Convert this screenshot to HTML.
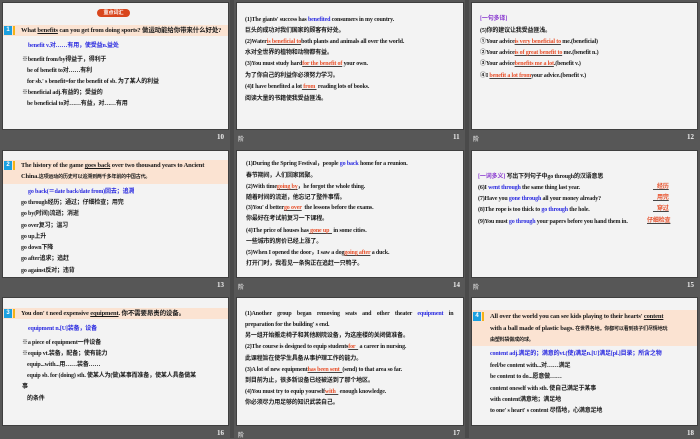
<!DOCTYPE html>
<html><head><meta charset="utf-8"><style>
*{margin:0;padding:0;box-sizing:border-box}
body{width:700px;height:438px;background:#575757;position:relative;overflow:hidden;font-family:"Liberation Serif","Noto Sans CJK SC",serif;font-weight:bold;color:#1a1a1a}
.s{position:absolute;background:#f3f3f3;border:1px solid #3f3f3f}
.l{position:absolute;font-size:6px;line-height:7px;white-space:nowrap;letter-spacing:-0.15px}
.b{color:#2a2ae0}
.r{color:#e8502a;text-decoration:underline;text-decoration-color:#444}
.band{position:absolute;left:0;right:0;background:#fbe3d2}
.num{position:absolute;width:8px;height:9px;background:#1aa0e0;color:#fff;font:bold 6px "Liberation Sans",sans-serif;text-align:center;line-height:9px}
.bar{position:absolute;width:2px;height:9px;background:#f5b316}
.pn{position:absolute;font-size:7px;color:#eee;font-family:"Liberation Serif",serif}
.jie{position:absolute;font-size:6px;color:#ccc;font-family:"Noto Sans CJK SC",sans-serif}
.sep{position:absolute;top:0;width:4px;height:438px;background:#4a4a4a}
.cn{font-family:"Noto Sans CJK SC",sans-serif}
</style></head><body>
<div class="sep" style="left:230px"></div><div class="sep" style="left:465px"></div>

<!-- slide 10 -->
<div class="s" style="left:2px;top:2px;width:227px;height:128px">
 <div style="position:absolute;left:94px;top:6px;width:33px;height:8px;border-radius:4px;background:#d9461d;color:#fff;font-size:5px;line-height:8px;text-align:center" class="cn">重点词汇</div>
 <div class="band" style="top:22px;height:11px"></div>
 <div class="num" style="left:1px;top:23px">1</div><div class="bar" style="left:10px;top:23px"></div>
 <div class="l" style="left:18px;top:24px;font-size:6.5px">What <u>benefits</u> can you get from doing sports? 做运动能给你带来什么好处?</div>
 <div class="l b" style="left:25px;top:40px">benefit v.对……有用，使受益n.益处</div>
 <div class="l" style="left:19px;top:54px">※benefit from/by得益于，得利于</div>
 <div class="l" style="left:24px;top:65px">be of benefit to对……有利</div>
 <div class="l" style="left:24px;top:76px">for sb.' s benefit=for the benefit of sb. 为了某人的利益</div>
 <div class="l" style="left:19px;top:87px">※beneficial adj.有益的；受益的</div>
 <div class="l" style="left:24px;top:98px">be beneficial to对……有益，对……有用</div>
</div>
<div class="pn" style="left:217px;top:133px">10</div>

<!-- slide 11 -->
<div class="s" style="left:236px;top:2px;width:228px;height:128px">
 <div class="l" style="left:8px;top:14px">(1)The giants' success has <span class="b">benefited</span> consumers in my country.</div>
 <div class="l" style="left:8px;top:25px">巨头的成功对我们国家的顾客有好处。</div>
 <div class="l" style="left:8px;top:36px">(2)Water<span class="r">is beneficial to</span>both plants and animals all over the world.</div>
 <div class="l" style="left:8px;top:47px">水对全世界的植物和动物都有益。</div>
 <div class="l" style="left:8px;top:58px">(3)You must study hard<span class="r">for the benefit of</span> your own.</div>
 <div class="l" style="left:8px;top:70px">为了你自己的利益你必须努力学习。</div>
 <div class="l" style="left:8px;top:81px">(4)I have benefited a lot<span class="r">&nbsp;from&nbsp;</span> reading lots of books.</div>
 <div class="l" style="left:8px;top:93px">阅读大量的书籍使我受益匪浅。</div>
</div>
<div class="jie" style="left:238px;top:134px">阶</div>
<div class="pn" style="left:453px;top:133px">11</div>

<!-- slide 12 -->
<div class="s" style="left:471px;top:2px;width:227px;height:128px">
 <div class="l" style="left:8px;top:13px;color:#8a3ad0">[一句多译]</div>
 <div class="l" style="left:8px;top:25px">(5)你的建议让我受益匪浅。</div>
 <div class="l" style="left:8px;top:36px">①Your advice<span class="r">is very beneficial to</span> me.(beneficial)</div>
 <div class="l" style="left:8px;top:47px">②Your advice<span class="r">is of great benefit to</span> me.(benefit n.)</div>
 <div class="l" style="left:8px;top:58px">③Your advice<span class="r">benefits me a lot</span>.(benefit v.)</div>
 <div class="l" style="left:8px;top:70px">④I <span class="r">benefit a lot from</span>your advice.(benefit v.)</div>
</div>
<div class="jie" style="left:473px;top:134px">阶</div>
<div class="pn" style="left:687px;top:133px">12</div>

<!-- slide 13 -->
<div class="s" style="left:2px;top:150px;width:227px;height:128px">
 <div class="band" style="top:9px;height:24px"></div>
 <div class="num" style="left:1px;top:10px">2</div><div class="bar" style="left:10px;top:10px"></div>
 <div class="l" style="left:18px;top:11px;font-size:6.5px">The history of the game <u>goes back</u> over two thousand years to Ancient</div>
 <div class="l" style="left:18px;top:22px;font-size:6.5px">China.<span style="font-size:5px">这项运动的历史可以追溯到两千多年前的中国古代。</span></div>
 <div class="l b" style="left:25px;top:38px">go back(＝date back/date from)回去；追溯</div>
 <div class="l" style="left:18px;top:49px">go through经历；通过；仔细检查；用完</div>
 <div class="l" style="left:18px;top:60px">go by(时间)流逝；消逝</div>
 <div class="l" style="left:18px;top:72px">go over复习；温习</div>
 <div class="l" style="left:18px;top:83px">go up上升</div>
 <div class="l" style="left:18px;top:94px">go down下降</div>
 <div class="l" style="left:18px;top:105px">go after追求；追赶</div>
 <div class="l" style="left:18px;top:117px">go against反对；违背</div>
</div>
<div class="pn" style="left:217px;top:281px">13</div>

<!-- slide 14 -->
<div class="s" style="left:236px;top:150px;width:228px;height:128px">
 <div class="l" style="left:9px;top:10px">(1)During the Spring Festival，people <span class="b">go back</span> home for a reunion.</div>
 <div class="l" style="left:9px;top:22px">春节期间，人们回家团聚。</div>
 <div class="l" style="left:9px;top:33px">(2)With time<span class="r">going by</span>，he forgot the whole thing.</div>
 <div class="l" style="left:9px;top:44px">随着时间的流逝，他忘记了整件事情。</div>
 <div class="l" style="left:9px;top:54px">(3)You' d better<span class="r">go over</span>&nbsp; the lessons before the exams.</div>
 <div class="l" style="left:9px;top:65px">你最好在考试前复习一下课程。</div>
 <div class="l" style="left:9px;top:77px">(4)The price of houses has<span class="r">&nbsp;gone up&nbsp;&nbsp;</span> in some cities.</div>
 <div class="l" style="left:9px;top:88px">一些城市的房价已经上涨了。</div>
 <div class="l" style="left:9px;top:99px">(5)When I opened the door，I saw a dog<span class="r">going after</span> a duck.</div>
 <div class="l" style="left:9px;top:110px">打开门时，我看见一条狗正在追赶一只鸭子。</div>
</div>
<div class="jie" style="left:238px;top:282px">阶</div>
<div class="pn" style="left:453px;top:281px">14</div>

<!-- slide 15 -->
<div class="s" style="left:471px;top:150px;width:227px;height:128px">
 <div class="l" style="left:6px;top:23px"><span style="color:#8a3ad0">[一词多义]</span> 写出下列句子中go through的汉语意思</div>
 <div class="l" style="left:6px;top:34px">(6)I <span class="b">went through</span> the same thing last year.</div>
 <div class="l" style="left:6px;top:45px">(7)Have you <span class="b">gone through</span> all your money already?</div>
 <div class="l" style="left:6px;top:56px">(8)The rope is too thick to <span class="b">go through</span> the hole.</div>
 <div class="l" style="left:6px;top:68px">(9)You must <span class="b">go through</span> your papers before you hand them in.</div>
 <div class="l r" style="left:181px;top:33px">&nbsp;&nbsp;&nbsp;经历</div>
 <div class="l r" style="left:181px;top:44px">&nbsp;&nbsp;&nbsp;用完</div>
 <div class="l r" style="left:181px;top:55px">&nbsp;&nbsp;&nbsp;穿过</div>
 <div class="l r" style="left:175px;top:67px">仔细检查</div>
</div>
<div class="jie" style="left:473px;top:282px">阶</div>
<div class="pn" style="left:687px;top:281px">15</div>

<!-- slide 16 -->
<div class="s" style="left:2px;top:297px;width:227px;height:129px">
 <div class="band" style="top:10px;height:11px"></div>
 <div class="num" style="left:1px;top:11px">3</div><div class="bar" style="left:10px;top:11px"></div>
 <div class="l" style="left:18px;top:12px;font-size:6.5px">You don' t need expensive <u>equipment</u>. 你不需要昂贵的设备。</div>
 <div class="l b" style="left:25px;top:28px">equipment n.[U]装备，设备</div>
 <div class="l" style="left:19px;top:42px">※a piece of equipment一件设备</div>
 <div class="l" style="left:19px;top:53px">※equip vt.装备，配备；使有能力</div>
 <div class="l" style="left:24px;top:64px">equip...with...用……装备……</div>
 <div class="l" style="left:24px;top:75px">equip sb. for (doing) sth. 使某人为(做)某事而准备，使某人具备做某</div>
 <div class="l" style="left:19px;top:86px">事</div>
 <div class="l" style="left:24px;top:98px">的条件</div>
</div>
<div class="pn" style="left:217px;top:429px">16</div>

<!-- slide 17 -->
<div class="s" style="left:236px;top:297px;width:228px;height:129px">
 <div class="l" style="left:8px;top:13px;word-spacing:4px">(1)Another group began removing seats and other theater <span class="b">equipment</span> in</div>
 <div class="l" style="left:8px;top:24px">preparation for the building' s end.</div>
 <div class="l" style="left:8px;top:35px">另一组开始搬走椅子和其他剧院设备，为这座楼的关闭做准备。</div>
 <div class="l" style="left:8px;top:46px">(2)The course is designed to equip students<span class="r">for&nbsp;&nbsp;</span> a career in nursing.</div>
 <div class="l" style="left:8px;top:58px">此课程旨在使学生具备从事护理工作的能力。</div>
 <div class="l" style="left:8px;top:69px">(3)A lot of new equipment<span class="r">has been sent&nbsp;&nbsp;</span>(send) to that area so far.</div>
 <div class="l" style="left:8px;top:80px">到目前为止，很多新设备已经被送到了那个地区。</div>
 <div class="l" style="left:8px;top:91px">(4)You must try to equip yourself<span class="r">with&nbsp;&nbsp;</span> enough knowledge.</div>
 <div class="l" style="left:8px;top:102px">你必须尽力用足够的知识武装自己。</div>
</div>
<div class="jie" style="left:238px;top:430px">阶</div>
<div class="pn" style="left:453px;top:429px">17</div>

<!-- slide 18 -->
<div class="s" style="left:471px;top:297px;width:227px;height:129px">
 <div class="band" style="top:12px;height:36px"></div>
 <div class="num" style="left:1px;top:14px">4</div><div class="bar" style="left:10px;top:14px"></div>
 <div class="l" style="left:18px;top:15px;font-size:6.5px">All over the world you can see kids playing to their hearts' <u>content</u></div>
 <div class="l" style="left:18px;top:27px;font-size:6.5px">with a ball made of plastic bags. <span style="font-size:5px">在世界各地，你都可以看到孩子们尽情地玩</span></div>
 <div class="l" style="left:18px;top:39px;font-size:5px">由塑料袋做成的球。</div>
 <div class="l b" style="left:18px;top:53px">content adj.满足的；满意的vt.(使)满足n.[U]满足[pl.]目录；所含之物</div>
 <div class="l" style="left:18px;top:65px">feel/be content with...对……满足</div>
 <div class="l" style="left:18px;top:76px">be content to do...愿意做……</div>
 <div class="l" style="left:18px;top:88px">content oneself with sth. 使自己满足于某事</div>
 <div class="l" style="left:18px;top:99px">with content满意地；满足地</div>
 <div class="l" style="left:18px;top:110px">to one' s heart' s content 尽情地，心满意足地</div>
</div>
<div class="pn" style="left:687px;top:429px">18</div>
</body></html>
